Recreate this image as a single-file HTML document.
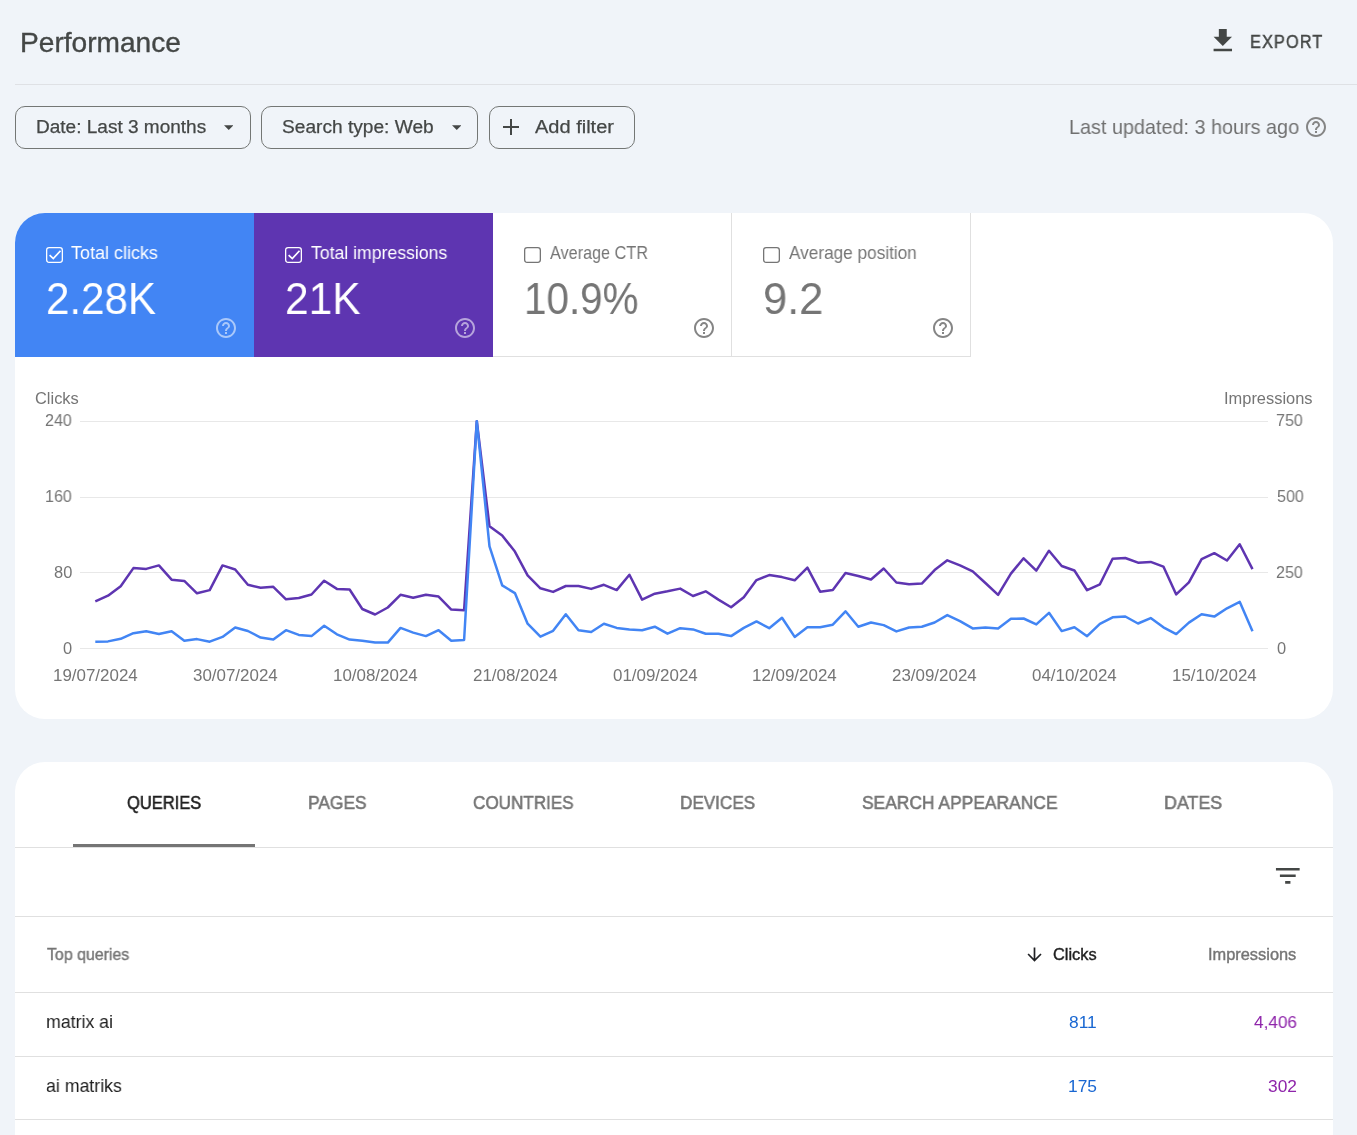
<!DOCTYPE html><html><head><meta charset='utf-8'><style>
*{margin:0;padding:0;box-sizing:border-box}
html,body{width:1357px;height:1135px;overflow:hidden;background:#f0f4f9;font-family:"Liberation Sans",sans-serif}
.t{position:absolute;white-space:nowrap;transform-origin:0 0;will-change:transform}
.abs{position:absolute}
.chip{position:absolute;top:106px;height:43px;border:1px solid #747775;border-radius:10px}
.card{position:absolute;background:#fff}
.hr{position:absolute;height:1px;background:#e0e0e0}
</style></head><body>
<div class="t" style="left:19.73px;top:26.75px;font-size:27.23px;line-height:31px;color:#444746;transform:scaleX(1.0329);-webkit-text-stroke:0.35px #444746;">Performance</div>
<svg class="abs" style="left:1207.2px;top:25px" width="31.6" height="31.6" viewBox="0 0 24 24"><path fill="#444746" d="M19 9h-4V3H9v6H5l7 7 7-7zM5 18v2h14v-2H5z"/></svg>
<div class="t" style="left:1249.60px;top:30.75px;font-size:18.54px;line-height:21px;color:#444746;transform:scaleX(0.8783);-webkit-text-stroke:0.45px #444746;letter-spacing:1.3px;">EXPORT</div>
<div class="hr" style="left:15px;width:1342px;top:84px;background:#dfe1e5"></div>
<div class="chip" style="left:15px;width:236px"></div>
<div class="t" style="left:35.55px;top:115.78px;font-size:18.71px;line-height:21px;color:#444746;transform:scaleX(1.0175);-webkit-text-stroke:0.25px #444746;">Date: Last 3 months</div>
<svg class="abs" style="left:223.7px;top:125px" width="9.5" height="5.1" viewBox="0 0 10 5"><path fill="#444746" d="M0 0h10L5 5z"/></svg>
<div class="chip" style="left:261px;width:217px"></div>
<div class="t" style="left:281.74px;top:115.78px;font-size:18.71px;line-height:21px;color:#444746;transform:scaleX(1.0233);-webkit-text-stroke:0.25px #444746;">Search type: Web</div>
<svg class="abs" style="left:451.5px;top:125px" width="9.5" height="5.1" viewBox="0 0 10 5"><path fill="#444746" d="M0 0h10L5 5z"/></svg>
<div class="chip" style="left:489px;width:146px"></div>
<div class="abs" style="left:503px;top:126px;width:16px;height:2px;background:#444746"></div><div class="abs" style="left:510px;top:119px;width:2px;height:16px;background:#444746"></div>
<div class="t" style="left:534.50px;top:115.78px;font-size:18.71px;line-height:21px;color:#444746;transform:scaleX(1.0703);-webkit-text-stroke:0.25px #444746;">Add filter</div>
<div class="t" style="left:1068.61px;top:115.88px;font-size:20.30px;line-height:22px;color:#707070;transform:scaleX(0.9764);">Last updated: 3 hours ago</div>
<svg class="abs" style="left:1304.2px;top:115px;opacity:1" width="24" height="24" viewBox="0 0 24 24"><path fill="#858585" d="M11 18h2v-2h-2v2zm1-16C6.48 2 2 6.48 2 12s4.48 10 10 10 10-4.48 10-10S17.52 2 12 2zm0 18c-4.41 0-8-3.59-8-8s3.59-8 8-8 8 3.59 8 8-3.59 8-8 8zm0-14c-2.21 0-4 1.79-4 4h2c0-1.1.9-2 2-2s2 .9 2 2c0 2-3 1.75-3 5h2c0-2.25 3-2.5 3-5 0-2.21-1.79-4-4-4z"/></svg>
<div class="card" style="left:15px;top:213px;width:1318px;height:506px;border-radius:30px;overflow:hidden">
<div class="abs" style="left:0;top:0;width:239px;height:144px;background:#4285f4"></div><div class="abs" style="left:239px;top:0;width:239px;height:144px;background:#5e35b1"></div><div class="abs" style="left:478px;top:0;width:239px;height:144px;border-right:1px solid #e0e0e0;border-bottom:1px solid #e0e0e0"></div><div class="abs" style="left:717px;top:0;width:239px;height:144px;border-right:1px solid #e0e0e0;border-bottom:1px solid #e0e0e0"></div></div>
<svg class="abs" style="left:46px;top:247px" width="17" height="16" viewBox="0 0 17 16"><rect x="0.65" y="0.65" width="15.7" height="14.7" rx="2.5" fill="none" stroke="#fff" stroke-width="1.3"/><path d="M3.6 8.1 L7.3 11.6 L14.5 3.7" fill="none" stroke="#fff" stroke-width="1.7"/></svg>
<div class="t" style="left:70.90px;top:243.00px;font-size:18.14px;line-height:20px;color:#fff;transform:scaleX(0.9916);">Total clicks</div>
<div class="t" style="left:46.09px;top:274.10px;font-size:44.49px;line-height:49px;color:#fff;transform:scaleX(0.9468);">2.28K</div>
<svg class="abs" style="left:213.8px;top:316px;opacity:0.55" width="24" height="24" viewBox="0 0 24 24"><path fill="#fff" d="M11 18h2v-2h-2v2zm1-16C6.48 2 2 6.48 2 12s4.48 10 10 10 10-4.48 10-10S17.52 2 12 2zm0 18c-4.41 0-8-3.59-8-8s3.59-8 8-8 8 3.59 8 8-3.59 8-8 8zm0-14c-2.21 0-4 1.79-4 4h2c0-1.1.9-2 2-2s2 .9 2 2c0 2-3 1.75-3 5h2c0-2.25 3-2.5 3-5 0-2.21-1.79-4-4-4z"/></svg>
<svg class="abs" style="left:285px;top:247px" width="17" height="16" viewBox="0 0 17 16"><rect x="0.65" y="0.65" width="15.7" height="14.7" rx="2.5" fill="none" stroke="#fff" stroke-width="1.3"/><path d="M3.6 8.1 L7.3 11.6 L14.5 3.7" fill="none" stroke="#fff" stroke-width="1.7"/></svg>
<div class="t" style="left:310.65px;top:243.00px;font-size:18.14px;line-height:20px;color:#fff;transform:scaleX(0.9729);">Total impressions</div>
<div class="t" style="left:284.88px;top:274.10px;font-size:44.49px;line-height:49px;color:#fff;transform:scaleX(0.9542);">21K</div>
<svg class="abs" style="left:452.8px;top:316px;opacity:0.55" width="24" height="24" viewBox="0 0 24 24"><path fill="#fff" d="M11 18h2v-2h-2v2zm1-16C6.48 2 2 6.48 2 12s4.48 10 10 10 10-4.48 10-10S17.52 2 12 2zm0 18c-4.41 0-8-3.59-8-8s3.59-8 8-8 8 3.59 8 8-3.59 8-8 8zm0-14c-2.21 0-4 1.79-4 4h2c0-1.1.9-2 2-2s2 .9 2 2c0 2-3 1.75-3 5h2c0-2.25 3-2.5 3-5 0-2.21-1.79-4-4-4z"/></svg>
<svg class="abs" style="left:524px;top:247px" width="17" height="16" viewBox="0 0 17 16"><rect x="0.65" y="0.65" width="15.7" height="14.7" rx="2.5" fill="none" stroke="#757575" stroke-width="1.3"/></svg>
<div class="t" style="left:549.80px;top:243.00px;font-size:18.14px;line-height:20px;color:#757575;transform:scaleX(0.8945);">Average CTR</div>
<div class="t" style="left:524.37px;top:274.10px;font-size:44.49px;line-height:49px;color:#757575;transform:scaleX(0.9082);">10.9%</div>
<svg class="abs" style="left:691.8px;top:316px;opacity:1" width="24" height="24" viewBox="0 0 24 24"><path fill="#858585" d="M11 18h2v-2h-2v2zm1-16C6.48 2 2 6.48 2 12s4.48 10 10 10 10-4.48 10-10S17.52 2 12 2zm0 18c-4.41 0-8-3.59-8-8s3.59-8 8-8 8 3.59 8 8-3.59 8-8 8zm0-14c-2.21 0-4 1.79-4 4h2c0-1.1.9-2 2-2s2 .9 2 2c0 2-3 1.75-3 5h2c0-2.25 3-2.5 3-5 0-2.21-1.79-4-4-4z"/></svg>
<svg class="abs" style="left:763px;top:247px" width="17" height="16" viewBox="0 0 17 16"><rect x="0.65" y="0.65" width="15.7" height="14.7" rx="2.5" fill="none" stroke="#757575" stroke-width="1.3"/></svg>
<div class="t" style="left:788.80px;top:243.00px;font-size:18.14px;line-height:20px;color:#757575;transform:scaleX(0.9488);">Average position</div>
<div class="t" style="left:762.94px;top:274.10px;font-size:44.49px;line-height:49px;color:#757575;transform:scaleX(0.9773);">9.2</div>
<svg class="abs" style="left:930.8px;top:316px;opacity:1" width="24" height="24" viewBox="0 0 24 24"><path fill="#858585" d="M11 18h2v-2h-2v2zm1-16C6.48 2 2 6.48 2 12s4.48 10 10 10 10-4.48 10-10S17.52 2 12 2zm0 18c-4.41 0-8-3.59-8-8s3.59-8 8-8 8 3.59 8 8-3.59 8-8 8zm0-14c-2.21 0-4 1.79-4 4h2c0-1.1.9-2 2-2s2 .9 2 2c0 2-3 1.75-3 5h2c0-2.25 3-2.5 3-5 0-2.21-1.79-4-4-4z"/></svg>
<div class="t" style="left:35.19px;top:389.00px;font-size:16.43px;line-height:18px;color:#757575;transform:scaleX(0.9909);">Clicks</div>
<div class="t" style="left:1223.52px;top:389.00px;font-size:16.43px;line-height:18px;color:#757575;">Impressions</div>
<div class="hr" style="left:80px;width:1188px;top:420.8px;background:#e8e8e8"></div>
<div class="t" style="left:44.95px;top:411.00px;font-size:16.43px;line-height:18px;color:#757575;transform:scaleX(0.9766);">240</div>
<div class="t" style="left:1276.36px;top:411.00px;font-size:16.43px;line-height:18px;color:#757575;transform:scaleX(0.9766);">750</div>
<div class="hr" style="left:80px;width:1188px;top:496.5px;background:#e8e8e8"></div>
<div class="t" style="left:44.95px;top:487.00px;font-size:16.43px;line-height:18px;color:#757575;transform:scaleX(0.9766);">160</div>
<div class="t" style="left:1276.52px;top:487.00px;font-size:16.43px;line-height:18px;color:#757575;transform:scaleX(0.9766);">500</div>
<div class="hr" style="left:80px;width:1188px;top:572.1px;background:#e8e8e8"></div>
<div class="t" style="left:53.85px;top:563.00px;font-size:16.43px;line-height:18px;color:#757575;transform:scaleX(0.9766);">80</div>
<div class="t" style="left:1276.36px;top:563.00px;font-size:16.43px;line-height:18px;color:#757575;transform:scaleX(0.9766);">250</div>
<div class="hr" style="left:80px;width:1188px;top:647.8px;background:#e8e8e8"></div>
<div class="t" style="left:62.76px;top:639.00px;font-size:16.43px;line-height:18px;color:#757575;transform:scaleX(0.9766);">0</div>
<div class="t" style="left:1276.52px;top:639.00px;font-size:16.43px;line-height:18px;color:#757575;transform:scaleX(0.9766);">0</div>
<div class="t" style="left:52.93px;top:666.00px;font-size:16.43px;line-height:18px;color:#757575;transform:scaleX(1.0311);">19/07/2024</div>
<div class="t" style="left:193.10px;top:666.00px;font-size:16.43px;line-height:18px;color:#757575;transform:scaleX(1.0311);">30/07/2024</div>
<div class="t" style="left:332.68px;top:666.00px;font-size:16.43px;line-height:18px;color:#757575;transform:scaleX(1.0311);">10/08/2024</div>
<div class="t" style="left:472.77px;top:666.00px;font-size:16.43px;line-height:18px;color:#757575;transform:scaleX(1.0311);">21/08/2024</div>
<div class="t" style="left:612.73px;top:666.00px;font-size:16.43px;line-height:18px;color:#757575;transform:scaleX(1.0311);">01/09/2024</div>
<div class="t" style="left:752.31px;top:666.00px;font-size:16.43px;line-height:18px;color:#757575;transform:scaleX(1.0311);">12/09/2024</div>
<div class="t" style="left:892.40px;top:666.00px;font-size:16.43px;line-height:18px;color:#757575;transform:scaleX(1.0311);">23/09/2024</div>
<div class="t" style="left:1032.36px;top:666.00px;font-size:16.43px;line-height:18px;color:#757575;transform:scaleX(1.0311);">04/10/2024</div>
<div class="t" style="left:1171.94px;top:666.00px;font-size:16.43px;line-height:18px;color:#757575;transform:scaleX(1.0311);">15/10/2024</div>
<svg class="abs" style="left:0;top:0" width="1357" height="1135"><polyline fill="none" stroke="#5e35b1" stroke-width="2.5" stroke-linejoin="round" points="95.3,601.3 108.0,595.7 120.7,586.2 133.4,568.1 146.2,568.9 158.9,565.4 171.6,579.7 184.3,580.9 197.0,593.3 209.7,590.1 222.5,565.4 235.2,569.5 247.9,584.8 260.6,587.8 273.3,586.8 286.0,599.3 298.8,598.0 311.5,594.5 324.2,580.7 336.9,588.9 349.6,589.5 362.3,609.0 375.1,614.5 387.8,607.5 400.5,594.8 413.2,597.8 425.9,594.8 438.6,596.6 451.3,609.6 464.1,610.2 476.8,421.2 489.5,526.3 502.2,535.5 514.9,551.6 527.6,575.4 540.4,588.3 553.1,591.9 565.8,586.0 578.5,586.0 591.2,588.9 603.9,584.8 616.7,590.1 629.4,574.8 642.1,599.6 654.8,593.7 667.5,591.3 680.2,588.6 693.0,596.0 705.7,591.3 718.4,599.6 731.1,607.2 743.8,597.2 756.5,580.1 769.2,575.1 782.0,577.1 794.7,580.3 807.4,567.7 820.1,591.7 832.8,590.1 845.5,573.0 858.3,576.0 871.0,579.5 883.7,568.5 896.4,582.5 909.1,584.2 921.8,583.6 934.6,570.1 947.3,560.3 960.0,565.4 972.7,571.3 985.4,583.0 998.1,594.8 1010.9,573.6 1023.6,558.3 1036.3,570.7 1049.0,550.7 1061.7,566.0 1074.4,570.5 1087.1,590.2 1099.9,584.3 1112.6,558.7 1125.3,558.0 1138.0,562.7 1150.7,561.9 1163.4,566.6 1176.2,594.4 1188.9,582.3 1201.6,559.2 1214.3,553.2 1227.0,560.5 1239.7,544.2 1252.5,569.1"/><polyline fill="none" stroke="#4285f4" stroke-width="2.5" stroke-linejoin="round" points="95.3,641.7 108.0,641.4 120.7,638.8 133.4,633.2 146.2,631.2 158.9,634.0 171.6,631.2 184.3,640.8 197.0,639.1 209.7,641.7 222.5,636.9 235.2,627.5 247.9,631.0 260.6,637.6 273.3,639.6 286.0,630.2 298.8,634.9 311.5,636.1 324.2,625.7 336.9,634.3 349.6,639.6 362.3,640.8 375.1,642.6 387.8,642.6 400.5,627.9 413.2,632.6 425.9,636.1 438.6,630.2 451.3,640.8 464.1,640.0 476.8,421.2 489.5,546.3 502.2,585.4 514.9,593.1 527.6,623.7 540.4,636.7 553.1,630.8 565.8,614.3 578.5,630.2 591.2,632.0 603.9,623.7 616.7,627.9 629.4,629.6 642.1,630.2 654.8,626.7 667.5,633.7 680.2,628.2 693.0,629.4 705.7,633.7 718.4,633.7 731.1,636.1 743.8,627.9 756.5,621.4 769.2,628.2 782.0,617.8 794.7,636.9 807.4,627.3 820.1,627.3 832.8,624.7 845.5,611.3 858.3,626.7 871.0,622.5 883.7,625.1 896.4,631.4 909.1,627.5 921.8,626.7 934.6,622.5 947.3,615.1 960.0,621.1 972.7,628.4 985.4,627.5 998.1,628.4 1010.9,618.8 1023.6,618.5 1036.3,624.4 1049.0,612.8 1061.7,631.1 1074.4,627.3 1087.1,636.2 1099.9,623.8 1112.6,617.3 1125.3,616.5 1138.0,623.5 1150.7,618.1 1163.4,627.3 1176.2,634.1 1188.9,622.6 1201.6,614.3 1214.3,616.6 1227.0,608.3 1239.7,601.8 1252.5,631.2"/></svg>
<div class="card" style="left:15px;top:762px;width:1318px;height:420px;border-radius:30px 30px 0 0"></div>
<div class="t" style="left:126.69px;top:791.74px;font-size:18.55px;line-height:21px;color:#1f1f1f;transform:scaleX(0.8900);-webkit-text-stroke:0.55px #1f1f1f;">QUERIES</div>
<div class="t" style="left:307.61px;top:791.74px;font-size:18.55px;line-height:21px;color:#757575;transform:scaleX(0.9386);-webkit-text-stroke:0.55px #757575;">PAGES</div>
<div class="t" style="left:472.85px;top:791.74px;font-size:18.55px;line-height:21px;color:#757575;transform:scaleX(0.9217);-webkit-text-stroke:0.55px #757575;">COUNTRIES</div>
<div class="t" style="left:680.03px;top:791.74px;font-size:18.55px;line-height:21px;color:#757575;transform:scaleX(0.9227);-webkit-text-stroke:0.55px #757575;">DEVICES</div>
<div class="t" style="left:862.12px;top:791.74px;font-size:18.55px;line-height:21px;color:#757575;transform:scaleX(0.9397);-webkit-text-stroke:0.55px #757575;">SEARCH APPEARANCE</div>
<div class="t" style="left:1163.57px;top:791.74px;font-size:18.55px;line-height:21px;color:#757575;transform:scaleX(0.9629);-webkit-text-stroke:0.55px #757575;">DATES</div>
<div class="abs" style="left:73px;top:843.7px;width:182px;height:3px;background:#757575"></div>
<div class="hr" style="left:15px;width:1318px;top:847px"></div>
<svg class="abs" style="left:1272.25px;top:860.3px" width="31.6" height="31.6" viewBox="0 0 24 24"><path fill="#444746" d="M10 18h4v-2h-4v2zM3 6v2h18V6H3zm3 7h12v-2H6v2z"/></svg>
<div class="hr" style="left:15px;width:1318px;top:916px"></div>
<div class="t" style="left:46.68px;top:944.90px;font-size:16.23px;line-height:18px;color:#757575;transform:scaleX(0.9804);-webkit-text-stroke:0.4px #757575;">Top queries</div>
<svg class="abs" style="left:1026px;top:946px" width="17" height="17" viewBox="0 0 17 17"><path d="M8.5 1.4V14.6M2.1 8 L8.5 14.5 L15 8" fill="none" stroke="#202124" stroke-width="1.7"/></svg>
<div class="t" style="left:1052.98px;top:944.90px;font-size:16.23px;line-height:18px;color:#1f1f1f;transform:scaleX(1.0101);-webkit-text-stroke:0.4px #1f1f1f;">Clicks</div>
<div class="t" style="left:1207.82px;top:944.90px;font-size:16.23px;line-height:18px;color:#757575;transform:scaleX(1.0098);-webkit-text-stroke:0.4px #757575;">Impressions</div>
<div class="hr" style="left:15px;width:1318px;top:992px"></div>
<div class="t" style="left:46.15px;top:1010.90px;font-size:18.87px;line-height:21px;color:#1f1f1f;transform:scaleX(0.9400);">matrix ai</div>
<div class="t" style="left:1069.29px;top:1011.84px;font-size:17.36px;line-height:20px;color:#1967d2;transform:scaleX(0.9870);">811</div>
<div class="t" style="left:1253.53px;top:1011.84px;font-size:17.36px;line-height:20px;color:#8e24aa;transform:scaleX(0.9870);">4,406</div>
<div class="hr" style="left:15px;width:1318px;top:1056px"></div>
<div class="t" style="left:46.19px;top:1075.00px;font-size:18.87px;line-height:21px;color:#1f1f1f;transform:scaleX(0.9400);">ai matriks</div>
<div class="t" style="left:1068.01px;top:1075.90px;font-size:17.36px;line-height:20px;color:#1967d2;transform:scaleX(0.9870);">175</div>
<div class="t" style="left:1267.81px;top:1075.90px;font-size:17.36px;line-height:20px;color:#8e24aa;transform:scaleX(0.9870);">302</div>
<div class="hr" style="left:15px;width:1318px;top:1119px"></div>
</body></html>
